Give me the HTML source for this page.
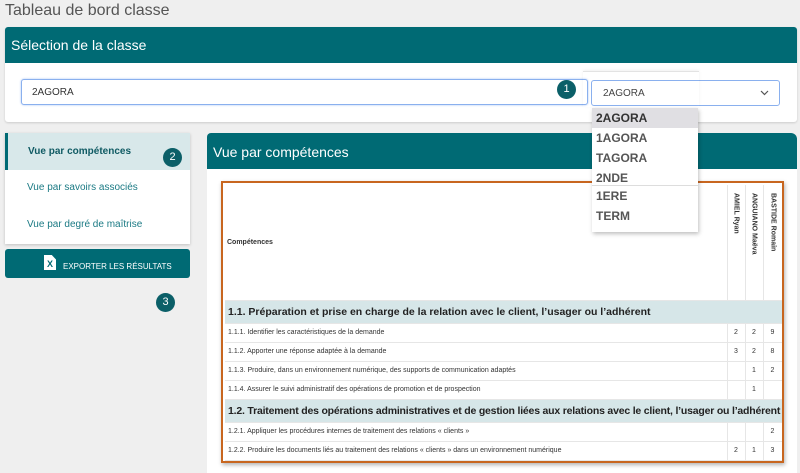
<!DOCTYPE html>
<html><head><meta charset="utf-8">
<style>
*{box-sizing:border-box;margin:0;padding:0}
body{width:800px;height:469px;overflow:hidden;background:#efefef;font-family:"Liberation Sans",sans-serif;position:relative}
.a{position:absolute}
.teal{background:#006a74}
.badge{position:absolute;width:19px;height:19px;border-radius:50%;background:#0b5f68;color:#fff;font-size:11px;line-height:19px;text-align:center}
.dd div{height:20px;line-height:20px;padding-left:4px;font-weight:bold;font-size:12px;color:#555}
table{border-collapse:collapse;table-layout:fixed;width:557px;font-size:7px;color:#333}
td{border-bottom:1px solid #e6e6e6;border-right:1px solid #e6e6e6;height:19px;padding-left:3px;white-space:nowrap;overflow:visible}
td.n{text-align:center;padding:0}
tr.s td{background:#d6e6e8;font-size:10.5px;font-weight:bold;height:23px;color:#222;border-right:0}
td.v{vertical-align:top;padding:8px 0 0 0}
td.v div{writing-mode:vertical-rl;font-size:7px;font-weight:bold;margin:0 auto}
</style></head><body>
<div class="a" style="left:5px;top:2px;font-size:16px;color:#555">Tableau de bord classe</div>
<div class="a" style="left:5px;top:27px;width:792px;height:95px;background:#fff;border-radius:3px;box-shadow:0 1px 2px rgba(0,0,0,.15)">
 <div class="teal" style="height:36px;border-radius:3px 3px 0 0;color:#fff;font-size:14px;padding:10px 0 0 6px">Sélection de la classe</div>
</div>
<div class="a" style="left:21px;top:79px;width:567px;height:26px;border:1px solid #8ab0ee;border-radius:3px;background:#fff;box-shadow:0 0 2px #a8c4f4;font-size:10px;color:#333;padding:7px 0 0 10px">2AGORA</div>
<div class="badge" style="left:557px;top:80px">1</div>
<div class="a" style="left:591px;top:80px;width:189px;height:26px;border:1px solid #8ab0ee;border-radius:3px;background:#fff;font-size:10px;color:#444;padding:7px 0 0 11px">2AGORA<svg style="position:absolute;right:10px;top:9px" width="9" height="6" viewBox="0 0 9 6"><path d="M1 1 L4.5 4.5 L8 1" fill="none" stroke="#555" stroke-width="1.2"/></svg></div>
<div class="a" style="left:207px;top:133px;width:590px;height:340px;background:#fff;border-radius:4px 6px 0 0">
 <div class="teal" style="height:36px;border-radius:4px 6px 0 0;color:#fff;font-size:14px;padding:11px 0 0 6px">Vue par compétences</div>
</div>
<div class="a" style="left:5px;top:133px;width:185px;height:111px;background:#fff;box-shadow:0 1px 3px rgba(0,0,0,.2);font-size:10px;color:#1b7a84">
 <div style="height:37px;background:#d8e8ea;border-left:3px solid #006a74;padding:13px 0 0 20px;font-weight:bold;color:#0f5a63">Vue par compétences</div>
 <div style="height:37px;padding:12px 0 0 22px">Vue par savoirs associés</div>
 <div style="height:37px;padding:12px 0 0 22px">Vue par degré de maîtrise</div>
</div>
<div class="badge" style="left:163px;top:148px">2</div>
<div class="a teal" style="left:5px;top:249px;width:185px;height:29px;border-radius:3px;color:#fff;font-size:8px">
 <div class="a" style="left:39px;top:6px;width:12px;height:15px;background:#fff;color:#006a74;font-weight:bold;font-size:9px;text-align:center;line-height:19px;clip-path:polygon(0 0,65% 0,100% 30%,100% 100%,0 100%)">X</div>
 <div class="a" style="left:58px;top:13px">EXPORTER LES RÉSULTATS</div>
</div>
<div class="badge" style="left:156px;top:293px">3</div>
<div class="a" style="left:221px;top:181px;width:563px;height:282px;border:2px solid #c8661f;background:#fff;box-shadow:1px 2px 4px rgba(0,0,0,.3);overflow:hidden;padding:2px 0 0 2px">
<table>
<colgroup><col style="width:502px"><col style="width:18px"><col style="width:18px"><col style="width:19px"></colgroup>
<tr><td style="height:115px;font-weight:bold;font-size:7px;padding-left:2px">Compétences</td><td class="n v"><div>AMIEL Ryan</div></td><td class="n v"><div>ANGUIANO Maëva</div></td><td class="n v" style="border-right:0"><div>BASTIDE Romain</div></td></tr>
<tr class="s"><td colspan="4">1.1. Préparation et prise en charge de la relation avec le client, l’usager ou l’adhérent</td></tr>
<tr><td>1.1.1. Identifier les caractéristiques de la demande</td><td class="n">2</td><td class="n">2</td><td class="n">9</td></tr>
<tr><td>1.1.2. Apporter une réponse adaptée à la demande</td><td class="n">3</td><td class="n">2</td><td class="n">8</td></tr>
<tr><td>1.1.3. Produire, dans un environnement numérique, des supports de communication adaptés</td><td class="n"></td><td class="n">1</td><td class="n">2</td></tr>
<tr><td>1.1.4. Assurer le suivi administratif des opérations de promotion et de prospection</td><td class="n"></td><td class="n">1</td><td class="n"></td></tr>
<tr class="s"><td colspan="4" style="letter-spacing:-0.2px">1.2. Traitement des opérations administratives et de gestion liées aux relations avec le client, l’usager ou l’adhérent</td></tr>
<tr><td>1.2.1. Appliquer les procédures internes de traitement des relations « clients »</td><td class="n"></td><td class="n"></td><td class="n">2</td></tr>
<tr><td>1.2.2. Produire les documents liés au traitement des relations « clients » dans un environnement numérique</td><td class="n">2</td><td class="n">1</td><td class="n">3</td></tr>
</table>
</div>
<div class="a" style="left:583px;top:71px;width:116px;height:36px;border-top:1px solid #e3e3e3;box-shadow:0 -1px 3px rgba(0,0,0,.06)"></div>
<div class="a dd" style="left:592px;top:108px;width:106px;height:124px;background:#fff;box-shadow:1px 2px 4px rgba(0,0,0,.25);z-index:5">
 <div style="background:#e0dfe3;color:#333">2AGORA</div><div>1AGORA</div><div>TAGORA</div><div style="height:18px;overflow:hidden;border-bottom:1px solid #ddd">2NDE</div><div>1ERE</div><div>TERM</div>
</div>
</body></html>
